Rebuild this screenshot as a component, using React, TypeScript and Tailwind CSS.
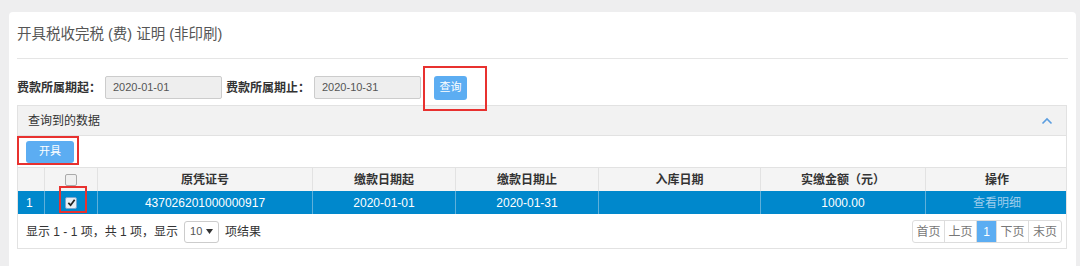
import React from "react";

const COLS = [
  { label: "", w: "w-[27px]" },
  { label: "", w: "w-[53px]" },
  { label: "原凭证号", w: "w-[215px]" },
  { label: "缴款日期起", w: "w-[143px]" },
  { label: "缴款日期止", w: "w-[143px]" },
  { label: "入库日期", w: "w-[162px]" },
  { label: "实缴金额（元）", w: "w-[165px]" },
  { label: "操作", w: "w-[142px]" },
];

const PAGES = ["首页", "上页", "1", "下页", "末页"];

function RedBox({ className }: { className: string }) {
  return <div className={`absolute border-2 border-[#e8312f] pointer-events-none ${className}`} />;
}

export default function App() {
  return (
    <div
      className="relative w-[1080px] h-[266px] overflow-hidden bg-[#eeeeef] pt-[12px] pl-[9px] text-[13px] text-[#333]"
      style={{ fontFamily: '"Liberation Sans", "Noto Sans CJK SC", sans-serif' }}
    >
      <div className="w-[1067px] h-[270px] bg-white rounded-[4px] px-[8px]">
        <div className="h-[47px] border-b border-[#e5e5e5] flex items-end pb-[12px] text-[14.5px] text-[#555]">
          开具税收完税 (费) 证明 (非印刷)
        </div>

        <div className="flex items-center h-[23px] mt-[17px] whitespace-nowrap">
          <span className="shrink-0 font-bold text-[12px] text-[#333] w-[88px]">费款所属期起：</span>
          <div className="shrink-0 w-[117px] h-[23px] bg-[#eeeeee] border border-[#ccc] rounded-[2px] flex items-center px-[7px] text-[11px] text-[#555]">
            2020-01-01
          </div>
          <span className="shrink-0 font-bold text-[12px] text-[#333] w-[88px] ml-[4px]">费款所属期止：</span>
          <div className="shrink-0 w-[107px] h-[23px] bg-[#eeeeee] border border-[#ccc] rounded-[2px] flex items-center px-[7px] text-[11px] text-[#555]">
            2020-10-31
          </div>
          <button className="shrink-0 ml-[13px] w-[33px] h-[24px] rounded-[3px] bg-[#5cadf2] text-white text-[11px] flex items-center justify-center">
            查询
          </button>
        </div>

        <div className="mt-[6px] w-[1050px] border border-[#e2e2e2]">
          <div className="h-[30px] bg-[#f2f2f2] border-b border-[#e2e2e2] flex items-center justify-between px-[10px] text-[12px] text-[#333]">
            <span>查询到的数据</span>
            <svg width="12" height="8" viewBox="0 0 12 8" className="mr-[3px]">
              <path d="M1.5 6.5 L6 2 L10.5 6.5" fill="none" stroke="#5b9ee0" strokeWidth="1.6" />
            </svg>
          </div>
          <div className="h-[31px] flex items-center px-[8px]">
            <button className="w-[48px] h-[22px] rounded-[3px] bg-[#5cadf2] text-white text-[11px] flex items-center justify-center">
              开具
            </button>
          </div>
          <div className="flex h-[24px] bg-[#f4f4f4] border-t border-[#e2e2e2]">
            {COLS.map((c, i) => (
              <div
                key={i}
                className={`${c.w} shrink-0 flex items-center justify-center font-bold text-[12px] text-[#333] ${i < COLS.length - 1 ? "border-r border-[#e2e2e2]" : ""}`}
              >
                {i === 1 ? (
                  <span className="w-[12px] h-[12px] border border-[#aaa] rounded-[2px] bg-[#f0f0f0]" />
                ) : (
                  c.label
                )}
              </div>
            ))}
          </div>
          <div className="flex h-[23px] bg-[#0088cc] text-white text-[12px]">
            <div className="w-[27px] shrink-0 flex items-center pl-[8px] border-r border-[#5fb0da]">1</div>
            <div className="w-[53px] shrink-0 flex items-center justify-center border-r border-[#5fb0da]">
              <span className="w-[12px] h-[12px] rounded-[2px] bg-[#e8eef4] border border-[#7aa7cf] flex items-center justify-center">
                <svg width="9" height="9" viewBox="0 0 10 10">
                  <path d="M1.5 5.5 L4 8 L8.5 2" fill="none" stroke="#222" strokeWidth="1.9" />
                </svg>
              </span>
            </div>
            <div className="w-[215px] shrink-0 flex items-center justify-center border-r border-[#5fb0da]">437026201000000917</div>
            <div className="w-[143px] shrink-0 flex items-center justify-center border-r border-[#5fb0da]">2020-01-01</div>
            <div className="w-[143px] shrink-0 flex items-center justify-center border-r border-[#5fb0da]">2020-01-31</div>
            <div className="w-[162px] shrink-0 border-r border-[#5fb0da]" />
            <div className="w-[165px] shrink-0 flex items-center justify-center border-r border-[#5fb0da]">1000.00</div>
            <div className="w-[142px] shrink-0 flex items-center justify-center text-[#9fcdeb]">查看明细</div>
          </div>
          <div className="h-[34px] flex items-center justify-between pl-[8px] pr-[4px] pt-[1px]">
            <div className="flex items-center text-[12px] text-[#333]">
              <span>显示 1 - 1 项，共 1 项，显示</span>
              <span className="mx-[6px] w-[35px] h-[22px] border border-[#ccc] rounded-[3px] flex items-center justify-between px-[5px] text-[11px] text-[#555]">
                10
                <svg width="7" height="5" viewBox="0 0 7 5">
                  <path d="M0 0 L7 0 L3.5 5 Z" fill="#333" />
                </svg>
              </span>
              <span>项结果</span>
            </div>
            <div className="flex h-[23px] border border-[#ddd] rounded-[3px] text-[12px] text-[#777]">
              {PAGES.map((p, i) => (
                <div
                  key={p}
                  className={`flex items-center justify-center ${p === "1" ? "w-[20px] bg-[#5cadf2] text-white" : "w-[32px]"} ${i < PAGES.length - 1 ? "border-r border-[#ddd]" : ""}`}
                >
                  {p}
                </div>
              ))}
            </div>
          </div>
        </div>
      </div>

      <RedBox className="left-[423px] top-[66px] w-[64px] h-[45px]" />
      <RedBox className="left-[17px] top-[136px] w-[62px] h-[29px]" />
      <RedBox className="left-[59px] top-[186px] w-[28px] h-[27px]" />
    </div>
  );
}
